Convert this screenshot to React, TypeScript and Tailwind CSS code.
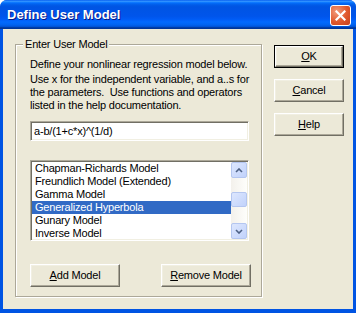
import type { ReactNode } from 'react';

const models = [
  'Chapman-Richards Model',
  'Freundlich Model (Extended)',
  'Gamma Model',
  'Generalized Hyperbola',
  'Gunary Model',
  'Inverse Model',
];

const selected = 'Generalized Hyperbola';

function Button({ children, width, isDefault }: { children: ReactNode; width: string; isDefault?: boolean }) {
  const raised =
    'border border-white border-b-[#716f64] border-r-[#716f64] shadow-[inset_-1px_-1px_0_#aca899,inset_1px_1px_0_#f1efe2]';
  if (isDefault) {
    return (
      <div className={`${width} h-[23px] border border-black`}>
        <div className={`flex h-full w-full items-center justify-center bg-[#ece9d8] ${raised}`}>{children}</div>
      </div>
    );
  }
  return (
    <div className={`${width} flex h-[23px] items-center justify-center bg-[#ece9d8] ${raised}`}>{children}</div>
  );
}

function ScrollButton({ down }: { down?: boolean }) {
  return (
    <div className="flex h-[16px] w-[16px] items-center justify-center rounded-[2px] border border-[#b4c6f0] bg-[linear-gradient(135deg,#dde7fe,#c1d2fb)]">
      <svg width="8" height="5" viewBox="0 0 8 5">
        <path
          d={down ? 'M1 1 L4 4 L7 1' : 'M1 4 L4 1 L7 4'}
          fill="none"
          stroke="#4d6185"
          strokeWidth="1.6"
        />
      </svg>
    </div>
  );
}

export default function App() {
  return (
    <div className="flex h-[313px] w-[356px] flex-col overflow-hidden rounded-t-[7px] bg-[#0054e3] font-['Liberation_Sans',Arial,sans-serif] text-[11px] tracking-[-0.2px] text-black">
      <div className="flex h-[29px] shrink-0 justify-between bg-[linear-gradient(to_bottom,#0058ee_0%,#3593ff_4%,#288eff_6%,#127dff_8%,#036ffc_10%,#0262ee_14%,#0057e5_20%,#0054e3_24%,#0055eb_56%,#005bf5_66%,#026afe_76%,#0062ef_86%,#0052d6_92%,#0040ab_94%,#003092_100%)] pl-[7px] pr-[5px]">
        <span className="mt-[7px] text-[13px] font-bold leading-[16px] tracking-normal text-white [text-shadow:1px_1px_#0a1883]">
          Define User Model
        </span>
        <div className="mt-[5px] flex h-[21px] w-[21px] items-center justify-center rounded-[3px] border border-white bg-[radial-gradient(circle_at_30%_30%,#f29b7c,#e0582c_55%,#c8401a)]">
          <svg width="11" height="11" viewBox="0 0 11 11">
            <path d="M1.5 1.5 L9.5 9.5 M9.5 1.5 L1.5 9.5" stroke="#fff" strokeWidth="2.2" strokeLinecap="square" />
          </svg>
        </div>
      </div>

      <div className="mx-[3px] mb-[4px] flex flex-1 bg-[#ece9d8] pl-[12px]">
        <div className="relative mt-[15px] h-[253px] w-[247px] border border-[#aca899] pl-[14px] pt-[13px] shadow-[inset_1px_1px_0_#fff,1px_1px_0_#fff]">
          <span className="absolute -top-[7px] left-[7px] bg-[#ece9d8] px-[2px] leading-[13px]">Enter User Model</span>

          <div className="leading-[13px]">
            <div className="mb-[2px] whitespace-pre">Define your nonlinear regression model below.</div>
            <div className="whitespace-pre">Use x for the independent variable, and a..s for</div>
            <div className="whitespace-pre">the parameters.  Use functions and operators</div>
            <div className="whitespace-pre">listed in the help documentation.</div>
          </div>

          <div className="mt-[9px] flex h-[20px] w-[219px] items-center border border-[#aca899] border-b-white border-r-white bg-white pl-[3px] shadow-[inset_1px_1px_0_#716f64,inset_-1px_-1px_0_#f1efe2]">
            a-b/(1+c*x)^(1/d)
          </div>

          <div className="mt-[19px] flex h-[81px] w-[219px] border border-[#aca899] border-b-white border-r-white bg-white p-[1px] shadow-[inset_1px_1px_0_#716f64,inset_-1px_-1px_0_#f1efe2]">
            <div className="flex-1 overflow-hidden">
              {models.map((m) => (
                <div
                  key={m}
                  className={`h-[13px] whitespace-nowrap pl-[3px] leading-[13px] ${m === selected ? 'bg-[#316ac5] text-white' : ''}`}
                >
                  {m}
                </div>
              ))}
            </div>
            <div className="flex w-[16px] flex-col bg-[linear-gradient(to_right,#f3f1ec,#fefefb)]">
              <ScrollButton />
              <div className="mt-[14px] h-[15px] w-[16px] rounded-[2px] border border-[#b4c6f0] bg-[linear-gradient(135deg,#dde7fe,#c1d2fb)]" />
              <div className="flex-1" />
              <ScrollButton down />
            </div>
          </div>

          <div className="mt-[23px] flex gap-[41px]">
            <Button width="w-[90px]">
              <span>
                <u>A</u>dd Model
              </span>
            </Button>
            <Button width="w-[90px]">
              <span>
                <u>R</u>emove Model
              </span>
            </Button>
          </div>
        </div>

        <div className="ml-[12px] mt-[16px] flex flex-col gap-[11px]">
          <Button width="w-[70px]" isDefault>
            <span>
              <u>O</u>K
            </span>
          </Button>
          <Button width="w-[70px]">
            <span>
              <u>C</u>ancel
            </span>
          </Button>
          <Button width="w-[70px]">
            <span>
              <u>H</u>elp
            </span>
          </Button>
        </div>
      </div>
    </div>
  );
}
